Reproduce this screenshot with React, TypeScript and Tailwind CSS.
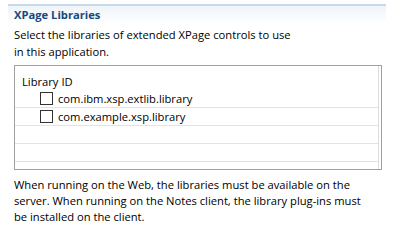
const rows = ["com.ibm.xsp.extlib.library", "com.example.xsp.library", "", ""];

const App = () => {
  return (
    <div
      className="w-[394px] h-[241px] bg-white text-[11.2px] text-black overflow-hidden"
      style={{ fontFamily: '"Segoe UI", "Open Sans", "Liberation Sans", sans-serif' }}
    >
      <div className="pt-[4px] pl-[8px] pr-[8px]">
        {/* section header */}
        <div className="border-t-2 border-[#c9dbea] bg-gradient-to-b from-[#eef4fa] to-white h-[20px] pl-[6px] flex items-center">
          <span className="font-bold text-[11.2px] text-[#19487a] leading-[16px]">XPage Libraries</span>
        </div>
        <div className="pl-[6px] pr-[4px]">
          <p className="leading-[17px] mt-[2px]">
            Select the libraries of extended XPage controls to use
            <br />
            in this application.
          </p>

          {/* table */}
          <div className="mt-[5px] w-[368px] h-[105px] border border-[#a0a0a0] flex">
            <div className="flex-1 flex flex-col">
              <div className="h-[24px] pl-[7px] flex items-end leading-[16px]">Library ID</div>
              {rows.map((r, i) => (
                <div key={i} className="h-[18px] flex items-center border-b border-[#e3e3e3]">
                  {r && (
                    <>
                      <span className="ml-[25px] w-[13px] h-[13px] border border-[#333] bg-white" />
                      <span className="ml-[5px] leading-[16px]">{r}</span>
                    </>
                  )}
                </div>
              ))}
            </div>
            <div className="w-[3px] border-l border-[#dcdcdc]" />
          </div>

          <p className="leading-[16px] mt-[7px]">
            When running on the Web, the libraries must be available on the
            <br />
            server. When running on the Notes client, the library plug-ins must
            <br />
            be installed on the client.
          </p>
        </div>
      </div>
    </div>
  );
};

export default App;
